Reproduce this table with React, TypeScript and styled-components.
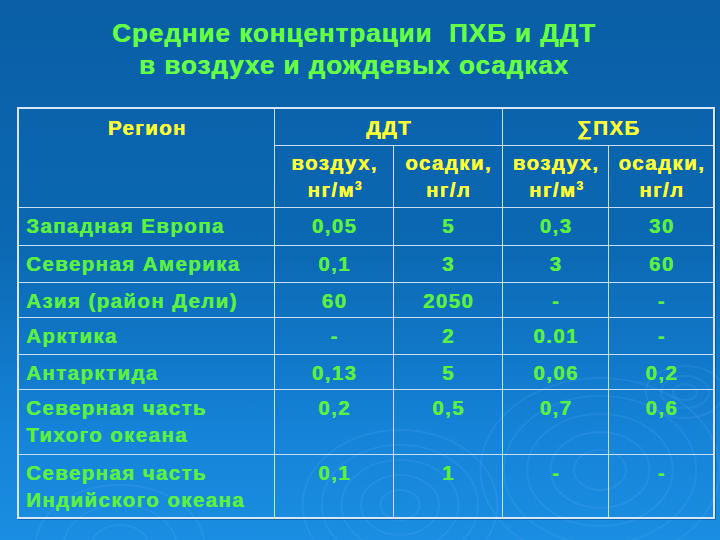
import React from "react";
import styled, { createGlobalStyle } from "styled-components";

const Global = createGlobalStyle`
  html, body { margin: 0; padding: 0; }
  body { font-family: "Liberation Sans", Arial, sans-serif; }
`;

const Slide = styled.div`
  position: relative;
  width: 720px;
  height: 540px;
  overflow: hidden;
  background: linear-gradient(180deg, #0a5fa6 0%, #0b68b2 45%, #1583d8 80%, #1a8ee2 100%);
  box-sizing: border-box;
`;

const Title = styled.h1`
  margin: 0;
  padding: 17px 12px 0 0;
  text-align: center;
  font-size: 26px;
  line-height: 32px;
  font-weight: bold;
  letter-spacing: 1px;
  color: #66ff44;
  text-shadow: 0.4px 0 0 #66ff44;
`;

const TableWrap = styled.div`
  position: relative;
  z-index: 1;
  margin: 26px 0 0 17px;
  width: 696px;
`;

const Table = styled.table`
  width: 696px;
  border-collapse: collapse;
  table-layout: fixed;
  border: 2px solid #d6e8f8;
  box-shadow: 1px 1px 0 rgba(0, 30, 80, 0.35);
`;

const Cell = styled.td<{ $head?: boolean; $left?: boolean; $h?: number; $pt?: number }>`
  border: 1px solid #c8def2;
  padding: ${(p) => p.$pt ?? 4}px 0 0 ${(p) => (p.$left ? 7 : 2)}px;
  height: ${(p) => p.$h ?? 38}px;
  box-sizing: border-box;
  vertical-align: top;
  text-align: ${(p) => (p.$left ? "left" : "center")};
  color: ${(p) => (p.$head ? "#ffff33" : "#5cf040")};
  font-size: 20.5px;
  font-weight: bold;
  line-height: 27px;
  letter-spacing: 1.4px;
  white-space: nowrap;
  text-shadow: 0.4px 0 0 ${(p) => (p.$head ? "#ffff33" : "#5cf040")};
`;

const Sup = styled.sup`
  font-size: 12px;
  line-height: 0;
  letter-spacing: 0;
  vertical-align: 7px;
`;

const Ripples = styled.svg`
  position: absolute;
  left: 0;
  top: 0;
  width: 720px;
  height: 540px;
  z-index: 0;
  pointer-events: none;
`;

const rows: { name: string[]; v: string[]; h: number }[] = [
  { name: ["Западная Европа"], v: ["0,05", "5", "0,3", "30"], h: 38 },
  { name: ["Северная Америка"], v: ["0,1", "3", "3", "60"], h: 37 },
  { name: ["Азия (район Дели)"], v: ["60", "2050", "-", "-"], h: 35 },
  { name: ["Арктика"], v: ["-", "2", "0.01", "-"], h: 37 },
  { name: ["Антарктида"], v: ["0,13", "5", "0,06", "0,2"], h: 35 },
  { name: ["Северная часть", "Тихого океана"], v: ["0,2", "0,5", "0,7", "0,6"], h: 65 },
  { name: ["Северная часть", "Индийского океана"], v: ["0,1", "1", "-", "-"], h: 64 },
];

export default function App() {
  return (
    <Slide>
      <Global />
      <Ripples viewBox="0 0 720 540">
        <g fill="none" stroke="rgba(120,190,255,0.12)" strokeWidth="2">
          {[20, 38, 56, 74, 92].map((r) => (
            <ellipse key={"a" + r} cx={600} cy={470} rx={r * 1.3} ry={r} />
          ))}
          {[15, 30, 45, 60, 75].map((r) => (
            <ellipse key={"b" + r} cx={400} cy={505} rx={r * 1.3} ry={r} />
          ))}
          {[8, 16, 26].map((r) => (
            <ellipse key={"c" + r} cx={685} cy={392} rx={r * 1.5} ry={r} />
          ))}
          {[20, 40, 60].map((r) => (
            <ellipse key={"d" + r} cx={120} cy={545} rx={r * 1.4} ry={r} />
          ))}
        </g>
      </Ripples>
      <Title>
        Средние концентрации&nbsp; ПХБ и ДДТ
        <br />в воздухе и дождевых осадках
      </Title>
      <TableWrap>
        <Table>
          <colgroup>
            <col style={{ width: 256 }} />
            <col style={{ width: 119 }} />
            <col style={{ width: 109 }} />
            <col style={{ width: 106 }} />
            <col style={{ width: 106 }} />
          </colgroup>
          <tbody>
            <tr>
              <Cell $head rowSpan={2} $h={37} $pt={5}>
                Регион
              </Cell>
              <Cell $head colSpan={2} $h={37} $pt={5}>
                ДДТ
              </Cell>
              <Cell $head colSpan={2} $h={37} $pt={5}>
                ∑ПХБ
              </Cell>
            </tr>
            <tr>
              <Cell $head $h={62} $pt={3}>
                воздух,
                <br />
                нг/м<Sup>3</Sup>
              </Cell>
              <Cell $head $h={62} $pt={3}>
                осадки,
                <br />
                нг/л
              </Cell>
              <Cell $head $h={62} $pt={3}>
                воздух,
                <br />
                нг/м<Sup>3</Sup>
              </Cell>
              <Cell $head $h={62} $pt={3}>
                осадки,
                <br />
                нг/л
              </Cell>
            </tr>
            {rows.map((r) => (
              <tr key={r.name.join(" ")}>
                <Cell $left $h={r.h}>
                  {r.name.map((n, i) => (
                    <React.Fragment key={n}>
                      {i > 0 && <br />}
                      {n}
                    </React.Fragment>
                  ))}
                </Cell>
                {r.v.map((v, i) => (
                  <Cell key={i} $h={r.h}>
                    {v}
                  </Cell>
                ))}
              </tr>
            ))}
          </tbody>
        </Table>
      </TableWrap>
    </Slide>
  );
}
